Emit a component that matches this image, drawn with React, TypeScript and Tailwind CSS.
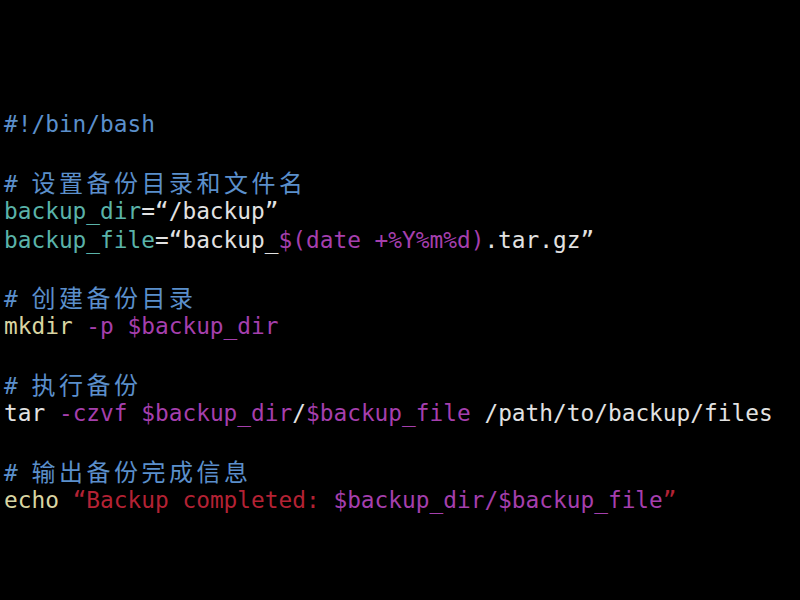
type Seg = { t: string; c: string; zh?: boolean }

const blue = 'text-[#5b8fcb]'
const teal = 'text-[#5ab3a9]'
const white = 'text-[#e2e2e2]'
const purple = 'text-[#a53fad]'
const yellow = 'text-[#d9d5a2]'
const red = 'text-[#b42234]'

const lines: Seg[][] = [
    [{ t: '#!/bin/bash', c: blue }],
    [],
    [{ t: '# ', c: blue }, { t: '设置备份目录和文件名', c: blue, zh: true }],
    [{ t: 'backup_dir', c: teal }, { t: '=“/backup”', c: white }],
    [{ t: 'backup_file', c: teal }, { t: '=“backup_', c: white }, { t: '$(date +%Y%m%d)', c: purple }, { t: '.tar.gz”', c: white }],
    [],
    [{ t: '# ', c: blue }, { t: '创建备份目录', c: blue, zh: true }],
    [{ t: 'mkdir', c: yellow }, { t: ' -p $backup_dir', c: purple }],
    [],
    [{ t: '# ', c: blue }, { t: '执行备份', c: blue, zh: true }],
    [{ t: 'tar', c: white }, { t: ' -czvf $backup_dir', c: purple }, { t: '/', c: white }, { t: '$backup_file', c: purple }, { t: ' /path/to/backup/files', c: white }],
    [],
    [{ t: '# ', c: blue }, { t: '输出备份完成信息', c: blue, zh: true }],
    [{ t: 'echo', c: yellow }, { t: ' “Backup completed: ', c: red }, { t: '$backup_dir/$backup_file', c: purple }, { t: '”', c: red }],
]

function App() {
    return (
        <div className='w-[800px] h-[600px] bg-black overflow-hidden pt-[110px] pl-[4px]'>
            <pre className='font-["DejaVu_Sans_Mono","Noto_Sans_CJK_SC",monospace] text-[22.8px] leading-[28.9px] m-0'>
                {lines.map((segs, i) => (
                    <div key={i} className='h-[28.9px] whitespace-pre'>
                        {segs.map((s, j) => (
                            <span
                                key={j}
                                className={s.zh ? `${s.c} font-["Noto_Sans_CJK_SC",sans-serif] text-[24px] tracking-[3.5px]` : s.c}
                            >
                                {s.t}
                            </span>
                        ))}
                    </div>
                ))}
            </pre>
        </div>
    )
}

export default App
